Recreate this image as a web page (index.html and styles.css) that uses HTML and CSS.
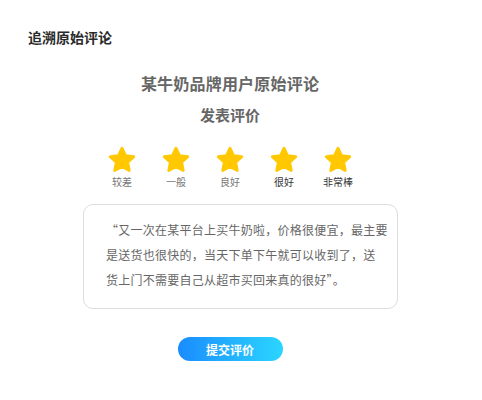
FILE: index.html
```html
<!DOCTYPE html>
<html lang="zh-CN">
<head>
<meta charset="utf-8">
<title>追溯原始评论</title>
<link rel="stylesheet" href="styles.css">
</head>
<body>
<div class="header">追溯原始评论</div>
<div class="main">
  <div class="subtitle">某牛奶品牌用户原始评论</div>
  <div class="subtitle2">发表评价</div>
  <div class="stars">
    <div class="star-item">
      <svg class="star" viewBox="0 0 28 28"><polygon points="14,3 17.3,10 25,10.9 19.3,16.1 20.8,23.8 14,20 7.2,23.8 8.7,16.1 3,10.9 10.7,10" /></svg>
      <span class="label">较差</span>
    </div>
    <div class="star-item">
      <svg class="star" viewBox="0 0 28 28"><polygon points="14,3 17.3,10 25,10.9 19.3,16.1 20.8,23.8 14,20 7.2,23.8 8.7,16.1 3,10.9 10.7,10" /></svg>
      <span class="label">一般</span>
    </div>
    <div class="star-item">
      <svg class="star" viewBox="0 0 28 28"><polygon points="14,3 17.3,10 25,10.9 19.3,16.1 20.8,23.8 14,20 7.2,23.8 8.7,16.1 3,10.9 10.7,10" /></svg>
      <span class="label">良好</span>
    </div>
    <div class="star-item">
      <svg class="star" viewBox="0 0 28 28"><polygon points="14,3 17.3,10 25,10.9 19.3,16.1 20.8,23.8 14,20 7.2,23.8 8.7,16.1 3,10.9 10.7,10" /></svg>
      <span class="label dark">很好</span>
    </div>
    <div class="star-item">
      <svg class="star" viewBox="0 0 28 28"><polygon points="14,3 17.3,10 25,10.9 19.3,16.1 20.8,23.8 14,20 7.2,23.8 8.7,16.1 3,10.9 10.7,10" /></svg>
      <span class="label dark">非常棒</span>
    </div>
  </div>
  <div class="review">“又一次在某平台上买牛奶啦，价格很便宜，最主要是送货也很快的，当天下单下午就可以收到了，送<br>货上门不需要自己从超市买回来真的很好”。</div>
  <button class="submit">提交评价</button>
</div>
</body>
</html>
```
FILE: styles.css
```css
html, body {
  margin: 0;
  padding: 0;
  background: #ffffff;
}
body {
  font-family: "Noto Sans CJK SC", "Noto Sans", sans-serif;
  width: 482px;
  height: 400px;
  overflow: hidden;
}
.header {
  padding: 27px 0 0 28px;
  font-size: 14px;
  line-height: 20px;
  font-weight: 700;
  color: #2a2a2a;
}
.main {
  width: 460px;
  display: flex;
  flex-direction: column;
  align-items: center;
}
.subtitle {
  margin-top: 25px;
  font-size: 16px;
  line-height: 22px;
  font-weight: 700;
  color: #666666;
  letter-spacing: 0.2px;
}
.subtitle2 {
  margin-top: 10px;
  font-size: 15px;
  line-height: 22px;
  font-weight: 700;
  color: #666666;
}
.stars {
  margin-top: 19px;
  display: flex;
}
.star-item {
  width: 54px;
  display: flex;
  flex-direction: column;
  align-items: center;
}
.star {
  width: 30px;
  height: 30px;
  display: block;
}
.star polygon {
  fill: #ffc800;
  stroke: #ffc800;
  stroke-width: 2.6;
  stroke-linejoin: round;
}
.label {
  margin-top: 0;
  font-size: 10px;
  line-height: 14px;
  font-weight: 400;
  color: #777777;
}
.label.dark {
  color: #333333;
}
.review {
  align-self: flex-start;
  margin-left: 83px;
  margin-top: 15px;
  box-sizing: border-box;
  width: 315px;
  padding: 12px 6px 16px 22px;
  border: 1px solid #dddddd;
  border-radius: 10px;
  font-size: 12px;
  line-height: 25px;
  letter-spacing: 0.25px;
  color: #666666;
}
.submit {
  margin-top: 28px;
  width: 105px;
  height: 24px;
  border: none;
  border-radius: 12px;
  background: linear-gradient(90deg, #1a8cff 0%, #2bd6ff 100%);
  color: #ffffff;
  font-family: "Noto Sans CJK SC", sans-serif;
  font-size: 12px;
  font-weight: 700;
  padding: 0;
  cursor: pointer;
}
```
